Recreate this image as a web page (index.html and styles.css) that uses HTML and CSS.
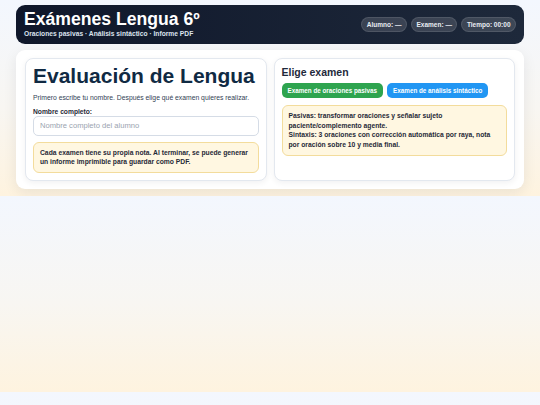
FILE: index.html
```html
<!DOCTYPE html>
<html lang="es">
<head>
<meta charset="utf-8">
<title>Exámenes Lengua 6º</title>
<link rel="stylesheet" href="styles.css">
</head>
<body>
<div class="page">
  <header class="topbar">
    <div class="brand">
      <h1 class="title">Exámenes Lengua 6º</h1>
      <div class="subtitle">Oraciones pasivas · Análisis sintáctico · Informe PDF</div>
    </div>
    <div class="pills">
      <span class="pill">Alumno: —</span>
      <span class="pill">Examen: —</span>
      <span class="pill">Tiempo: 00:00</span>
    </div>
  </header>
  <main class="main">
    <section class="card">
      <h2 class="heading">Evaluación de Lengua</h2>
      <p class="desc">Primero escribe tu nombre. Después elige qué examen quieres realizar.</p>
      <label class="label" for="nombre">Nombre completo:</label>
      <input class="input" id="nombre" type="text" placeholder="Nombre completo del alumno">
      <div class="note note-left">Cada examen tiene su propia nota. Al terminar, se puede generar un informe imprimible para guardar como PDF.</div>
    </section>
    <section class="card">
      <h3 class="subheading">Elige examen</h3>
      <div class="buttons">
        <button class="btn btn-green" type="button">Examen de oraciones pasivas</button>
        <button class="btn btn-blue" type="button">Examen de análisis sintáctico</button>
      </div>
      <div class="note note-right">Pasivas: transformar oraciones y señalar sujeto paciente/complemento agente.<br>Sintaxis: 3 oraciones con corrección automática por raya, nota por oración sobre 10 y media final.</div>
    </section>
  </main>
</div>
</body>
</html>
```
FILE: styles.css
```css
html {
  background: linear-gradient(180deg, #f3f7fe 0%, #f8f6f2 55%, #fef3df 100%);
  background-size: 100% 196px;
  background-repeat: repeat-y;
}
body {
  margin: 0;
  font-family: "Liberation Sans", Arial, sans-serif;
  color: #1f2937;
}
.page {
  padding: 5px 16px 7px;
}
.topbar {
  display: flex;
  justify-content: space-between;
  align-items: center;
  height: 39px;
  box-sizing: border-box;
  padding: 0 8px;
  border-radius: 9px;
  background: linear-gradient(90deg, #0f172a 0%, #1e293b 100%);
  color: #fff;
}
.brand {
  display: flex;
  flex-direction: column;
  margin-top: -1px;
}
.title {
  margin: 0;
  font-size: 17.6px;
  line-height: 1.1;
  font-weight: 700;
}
.subtitle {
  font-size: 6.7px;
  line-height: 1.2;
  font-weight: 700;
  color: #dce3ee;
  margin-top: 1px;
}
.pills {
  display: flex;
  gap: 4px;
}
.pill {
  display: flex;
  align-items: center;
  height: 15px;
  box-sizing: border-box;
  padding: 0 4.5px;
  border-radius: 999px;
  background: rgba(255, 255, 255, 0.14);
  border: 1px solid rgba(255, 255, 255, 0.1);
  font-size: 6.5px;
  font-weight: 700;
  color: #e8ecf2;
}
.main {
  margin-top: 6px;
  display: grid;
  grid-template-columns: 1fr 1fr;
  gap: 7px;
  padding: 8px 9px;
  background: #fff;
  border-radius: 9px;
  box-shadow: 0 4px 14px rgba(15, 23, 42, 0.08);
}
.card {
  border: 1px solid #e3e8ef;
  border-radius: 8px;
  padding: 4px 7px 7px;
  background: #fff;
  box-shadow: 0 2px 6px rgba(15, 23, 42, 0.06);
}
.heading {
  margin: 0;
  font-size: 21px;
  line-height: 1.2;
  font-weight: 700;
  color: #102a43;
}
.desc {
  margin: 4.4px 0 0;
  font-size: 6.8px;
  line-height: 1.4;
  color: #334155;
}
.label {
  display: block;
  margin-top: 5.6px;
  font-size: 6.7px;
  line-height: 1.2;
  font-weight: 700;
  color: #1f2937;
}
.input {
  display: block;
  width: 100%;
  box-sizing: border-box;
  height: 20px;
  margin: 0;
  padding: 0 6px;
  border: 1px solid #d5dce6;
  border-radius: 5px;
  font-family: "Liberation Sans", Arial, sans-serif;
  font-size: 7.6px;
  color: #1f2937;
  background: #fff;
}
.input::placeholder {
  color: #9aa3af;
}
.note {
  background: #fff7e1;
  border: 1px solid #f3dc9c;
  border-radius: 6px;
  font-weight: 700;
  color: #1f2937;
}
.note-left {
  margin-top: 6px;
  padding: 5.2px 6px;
  font-size: 6.75px;
  line-height: 9.3px;
}
.subheading {
  margin: 3px 0 0;
  font-size: 10.5px;
  line-height: 1.2;
  font-weight: 700;
  color: #1e293b;
}
.buttons {
  display: flex;
  gap: 4px;
  margin-top: 4.4px;
}
.btn {
  height: 15px;
  padding: 0 6px;
  border: 0;
  border-radius: 5px;
  font-family: "Liberation Sans", Arial, sans-serif;
  font-size: 6.3px;
  font-weight: 700;
  color: #fff;
}
.btn-green {
  background: #2ea44f;
}
.btn-blue {
  background: #2196f3;
}
.note-right {
  margin-top: 7px;
  padding: 5.5px 6px;
  font-size: 6.75px;
  line-height: 9.5px;
}
```
